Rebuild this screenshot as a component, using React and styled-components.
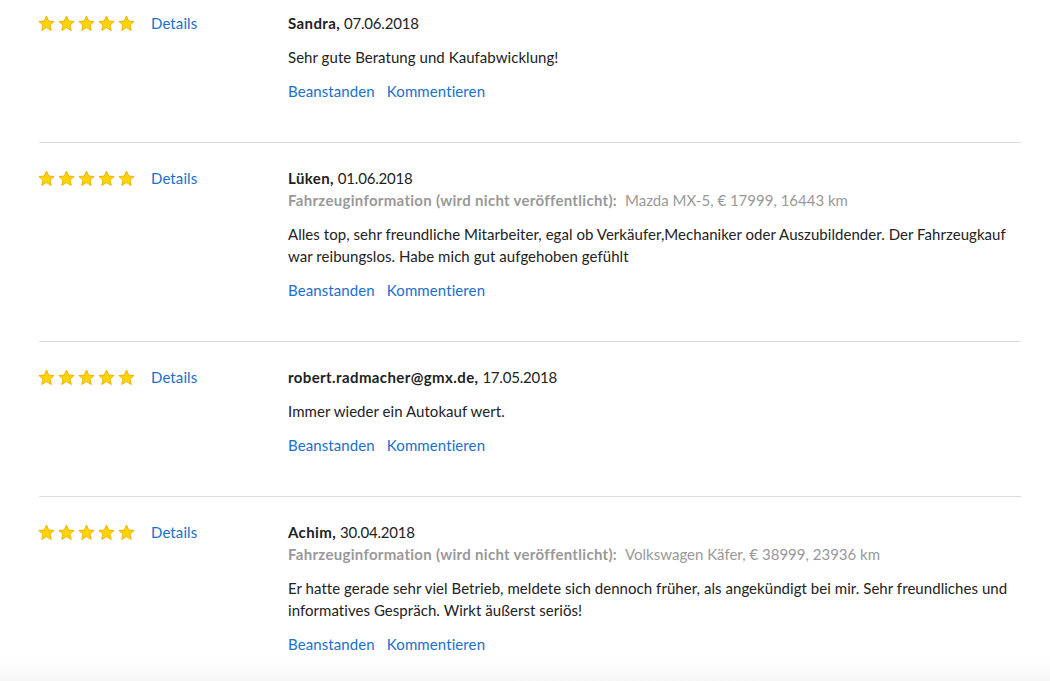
import React from "react";
import styled, { createGlobalStyle } from "styled-components";

const Global = createGlobalStyle`
  html, body { margin: 0; padding: 0; background: #fff; }
  body { font-family: "Lato", "Open Sans", sans-serif; }
`;

const Page = styled.div`
  min-height: 681px;
  background: linear-gradient(to bottom, #fff 0, #fff 660px, #f6f6f6 681px);
  padding: 0 29px 0 39px;
  box-sizing: border-box;
`;

const Review = styled.div`
  display: grid;
  grid-template-columns: 249px 1fr;
  padding: ${(p) => (p.$first ? "12px" : "24px")} 0 40px;
  border-top: ${(p) => (p.$first ? "none" : "1px solid #dcdcdc")};
`;

const Left = styled.div`
  display: flex;
  align-items: center;
  height: 22px;
  gap: 16px;
`;

const Stars = styled.div`
  display: flex;
  gap: 3px;
  margin-left: -1px;
`;

const Link = styled.a`
  color: #1a70cc;
  font-size: 15px;
  line-height: 22px;
  text-decoration: none;
  cursor: pointer;
  letter-spacing: 0.1px;
`;

const Content = styled.div`
  display: flex;
  flex-direction: column;
  font-size: 15px;
  line-height: 22px;
  color: #222;
`;

const Head = styled.div``;

const Name = styled.span`
  font-weight: 700;
  letter-spacing: 0.4px;
`;

const DateText = styled.span`
  letter-spacing: -0.2px;
`;

const Info = styled.div`
  color: #999;
`;

const InfoLabel = styled.span`
  font-weight: 700;
  letter-spacing: 0.3px;
  margin-right: 8px;
`;

const Text = styled.p`
  margin: 12px 0 0;
  letter-spacing: 0.05px;
`;

const Actions = styled.div`
  display: flex;
  gap: 12px;
  margin-top: 12px;
`;

const Star = () => (
  <svg width="17" height="17" viewBox="0 0 24 24">
    <polygon
      points="12,1.5 15.1,8.6 22.7,9.2 16.9,14.2 18.7,21.8 12,17.8 5.3,21.8 7.1,14.2 1.3,9.2 8.9,8.6"
      fill="#ffd400"
      stroke="#f2b100"
      strokeWidth="1.4"
      strokeLinejoin="round"
    />
  </svg>
);

const reviews = [
  { name: "Sandra", date: "07.06.2018", text: "Sehr gute Beratung und Kaufabwicklung!" },
  {
    name: "Lüken",
    date: "01.06.2018",
    info: "Mazda MX-5, € 17999, 16443 km",
    text: "Alles top, sehr freundliche Mitarbeiter, egal ob Verkäufer,Mechaniker oder Auszubildender. Der Fahrzeugkauf war reibungslos. Habe mich gut aufgehoben gefühlt",
  },
  { name: "robert.radmacher@gmx.de", date: "17.05.2018", text: "Immer wieder ein Autokauf wert." },
  {
    name: "Achim",
    date: "30.04.2018",
    info: "Volkswagen Käfer, € 38999, 23936 km",
    text: "Er hatte gerade sehr viel Betrieb, meldete sich dennoch früher, als angekündigt bei mir. Sehr freundliches und informatives Gespräch. Wirkt äußerst seriös!",
  },
];

export default function App() {
  return (
    <>
      <Global />
      <Page>
        {reviews.map((r, i) => (
          <Review key={i} $first={i === 0}>
            <Left>
              <Stars>
                {[0, 1, 2, 3, 4].map((s) => (
                  <Star key={s} />
                ))}
              </Stars>
              <Link>Details</Link>
            </Left>
            <Content>
              <Head>
                <Name>{r.name},</Name> <DateText>{r.date}</DateText>
              </Head>
              {r.info && (
                <Info>
                  <InfoLabel>Fahrzeuginformation (wird nicht veröffentlicht):</InfoLabel>
                  {r.info}
                </Info>
              )}
              <Text>{r.text}</Text>
              <Actions>
                <Link>Beanstanden</Link>
                <Link>Kommentieren</Link>
              </Actions>
            </Content>
          </Review>
        ))}
      </Page>
    </>
  );
}
